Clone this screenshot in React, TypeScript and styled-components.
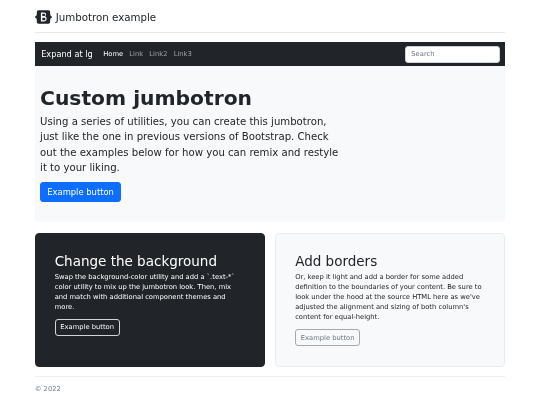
import React from 'react';
import styled, { createGlobalStyle } from 'styled-components';

const Global = createGlobalStyle`
	* { box-sizing: border-box; }
	body {
		margin: 0;
		background: #fff;
		color: #212529;
		font-family: "DejaVu Sans", sans-serif;
	}
`;

const Page = styled.div`
	width: 540px;
	height: 405px;
	padding: 0 34.7px;
	overflow: hidden;
	filter: blur(0.35px);
`;

const Header = styled.header`
	display: flex;
	align-items: center;
	gap: 4px;
	height: 33px;
	margin-bottom: 9px;
	padding-top: 1px;
	border-bottom: 1px solid #e9e9e9;
	font-size: 10.25px;
`;

const Navbar = styled.nav`
	display: flex;
	align-items: center;
	height: 24px;
	padding: 0 5.5px 0 6.5px;
	background: #212529;
`;

const Brand = styled.span`
	color: #fff;
	font-size: 8.2px;
	margin-right: 10.5px;
`;

const NavLink = styled.a<{ $active?: boolean }>`
	color: ${(p) => (p.$active ? '#fff' : 'rgba(255,255,255,.55)')};
	font-size: 6.75px;
	margin-right: 6.2px;
`;

const Search = styled.input`
	margin-left: auto;
	width: 95px;
	height: 17px;
	border: 1px solid #ced4da;
	border-radius: 3px;
	padding: 0 5.5px;
	font: 6.75px "DejaVu Sans", sans-serif;
	background: #fff;
	&::placeholder { color: #6c757d; }
`;

const Jumbotron = styled.section`
	height: 156px;
	padding: 20px 16px 0 5.4px;
	margin-bottom: 10.5px;
	background: #f8f9fa;
	border-radius: 0 0 4px 4px;
`;

const Title = styled.h1`
	margin: 0 0 3.9px;
	font-size: 20.25px;
	font-weight: 700;
	line-height: 1.2;
`;

const Lead = styled.p`
	margin: 0 0 7px;
	width: 305px;
	font-size: 10.13px;
	line-height: 1.5;
`;

const Primary = styled.button`
	display: block;
	height: 20px;
	width: 81px;
	padding: 0;
	border: 1px solid #0d6efd;
	border-radius: 3px;
	background: #0d6efd;
	color: #fff;
	font: 8.4px "DejaVu Sans", sans-serif;
`;

const Columns = styled.div`
	display: grid;
	grid-template-columns: 1fr 1fr;
	gap: 10.3px;
`;

const Card = styled.article<{ $dark?: boolean }>`
	height: 134px;
	padding: 19px;
	border-radius: 4px;
	background: ${(p) => (p.$dark ? '#212529' : '#f8f9fa')};
	color: ${(p) => (p.$dark ? '#fff' : '#212529')};
	border: 1px solid ${(p) => (p.$dark ? '#212529' : '#e9ecef')};
`;

const CardTitle = styled.h2`
	margin: 0 0 3px;
	font-size: 13.5px;
	font-weight: 400;
	line-height: 1.2;
`;

const CardText = styled.p`
	margin: 0 0 6.9px;
	font-size: 6.75px;
	line-height: 1.5;
`;

const Outline = styled.button<{ $dark?: boolean }>`
	display: block;
	height: 16.8px;
	width: 65px;
	padding: 0;
	border-radius: 3px;
	background: transparent;
	border: 1px solid ${(p) => (p.$dark ? '#d3d4d5' : '#a3a8ad')};
	color: ${(p) => (p.$dark ? '#f8f9fa' : '#6c757d')};
	font: 6.75px "DejaVu Sans", sans-serif;
`;

const Footer = styled.footer`
	margin-top: 9.5px;
	padding-top: 8px;
	border-top: 1px solid #eeeeee;
	color: #6c757d;
	font-size: 6.75px;
`;

const Logo = () => (
	<svg width="17" height="14" viewBox="0 0 118 94">
		<path
			fill="#212529"
			fillRule="evenodd"
			d="M24.5 0C17.8 0 12.9 5.900 13.100 12.200c.2 6.100 0 14-2 20.500C9.100 39.200 5.700 43.300 0 43.800v6.400c5.700.5 9.100 4.600 11.100 11.100 2 6.500 2.200 14.400 2 20.500C12.900 88.100 17.800 94 24.500 94h69c6.700 0 11.600-5.900 11.400-12.200-.2-6.100 0-14 2-20.500 2-6.500 5.400-10.600 11.100-11.100v-6.400c-5.700-.5-9.100-4.600-11.100-11.100-2-6.500-2.200-14.400-2-20.500C105.100 5.900 100.200 0 93.500 0h-69zM80 63.400C80 72.800 73 78.500 61.400 78.500H41V16h20.200c9.900 0 16.400 5.400 16.400 13.600 0 5.800-4.400 11-9.900 11.900v.3C75.200 42.600 80 48 80 55.300v8.100zM51 24.300v16.400h9.100c7 0 10.900-2.800 10.900-7.900 0-4.800-3.300-7.500-9.200-7.500H51zm0 24.800v20.200h10.600c7.300 0 11.200-2.900 11.200-8.400 0-5.500-4-8.400-11.700-8.400H51z"
		/>
	</svg>
);

const App: React.FC = () => {
	return (
		<Page>
			<Global />
			<Header>
				<Logo />
				<span>Jumbotron example</span>
			</Header>
			<Navbar>
				<Brand>Expand at lg</Brand>
				<NavLink $active>Home</NavLink>
				<NavLink>Link</NavLink>
				<NavLink>Link2</NavLink>
				<NavLink>Link3</NavLink>
				<Search placeholder="Search" />
			</Navbar>
			<Jumbotron>
				<Title>Custom jumbotron</Title>
				<Lead>
					Using a series of utilities, you can create this jumbotron, just like the one in
					previous versions of Bootstrap. Check out the examples below for how you can remix
					and restyle it to your liking.
				</Lead>
				<Primary>Example button</Primary>
			</Jumbotron>
			<Columns>
				<Card $dark>
					<CardTitle>Change the background</CardTitle>
					<CardText>
						Swap the background-color utility and add a `.text-*` color utility to mix up the
						jumbotron look. Then, mix and match with additional component themes and more.
					</CardText>
					<Outline $dark>Example button</Outline>
				</Card>
				<Card>
					<CardTitle>Add borders</CardTitle>
					<CardText>
						Or, keep it light and add a border for some added definition to the boundaries of
						your content. Be sure to look under the hood at the source HTML here as we've
						adjusted the alignment and sizing of both column's content for equal-height.
					</CardText>
					<Outline>Example button</Outline>
				</Card>
			</Columns>
			<Footer>© 2022</Footer>
		</Page>
	);
};

export default App;
